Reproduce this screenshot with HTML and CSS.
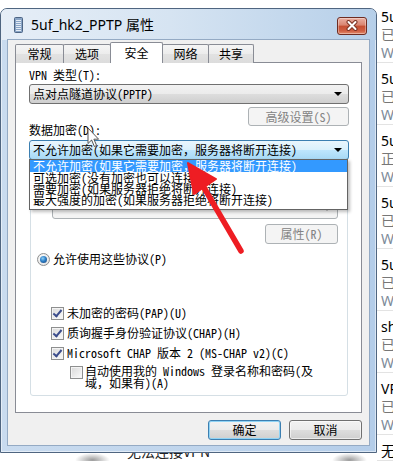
FILE: index.html
```html
<!DOCTYPE html>
<html lang="zh-CN">

<head>
    <meta charset="UTF-8">
    <meta name="viewport" content="width=device-width, initial-scale=1.0">
    <title>5uf_hk2_PPTP 属性</title>
    <link rel="stylesheet" href="styles.css">
</head>

<body>

    <div class="screen">
        <div class="left-col">
            <div class="window">
                <div class="titlebar">
                    <svg class="win-icon" width="9" height="16" viewBox="0 0 9 16">
                        <rect x="0.5" y="0.5" width="8" height="15" rx="1" fill="#8aa5c6" stroke="#4d6584" />
                        <path d="M2 3.5h5M2 5.5h5M2 7.5h5M2 9.5h5M2 11.5h5M2 13.5h5" stroke="#e4ecf5" stroke-width="1" />
                    </svg>
                    <span class="title">5uf_hk2_PPTP 属性</span>
                    <div class="close-btn">
                        <svg width="14" height="11" viewBox="0 0 14 11">
                            <path d="M3.5 2 L10.5 9 M10.5 2 L3.5 9" stroke="#7c3426" stroke-width="4" stroke-linecap="round" />
                            <path d="M3.5 2 L10.5 9 M10.5 2 L3.5 9" stroke="#fff" stroke-width="2" stroke-linecap="round" />
                        </svg>
                    </div>
                </div>

                <div class="client">
                    <div class="tabs">
                        <div class="tab tab-1">常规</div>
                        <div class="tab tab-2">选项</div>
                        <div class="tab tab-3 active">安全</div>
                        <div class="tab tab-4">网络</div>
                        <div class="tab tab-5">共享</div>
                    </div>

                    <div class="panel">
                        <div class="label label-type">VPN 类型(T):</div>
                        <div class="combo">点对点隧道协议(PPTP)<span class="arrow"></span></div>
                        <div class="btn-row">
                            <div class="btn disabled btn-adv">高级设置(S)</div>
                        </div>

                        <div class="label label-enc">数据加密(D):</div>
                        <div class="combo-wrap">
                            <div class="combo open">不允许加密(如果它需要加密，服务器将断开连接)<span class="arrow"></span></div>
                            <ul class="droplist">
                                <li class="sel">不允许加密(如果它需要加密，服务器将断开连接)</li>
                                <li>可选加密(没有加密也可以连接)</li>
                                <li>需要加密(如果服务器拒绝将断开连接)</li>
                                <li>最大强度的加密(如果服务器拒绝将断开连接)</li>
                            </ul>
                        </div>

                        <!-- Authentication group -->
                        <div class="group">
                            <div class="option eap-row"><span class="radio"></span>使用可扩展的身份验证协议(EAP)(E)</div>
                            <div class="combo combo-eap"><span class="arrow"></span></div>
                            <div class="btn-row btn-row-eap">
                                <div class="btn disabled btn-prop">属性(R)</div>
                            </div>
                            <div class="option radio-row"><span class="radio checked"></span>允许使用这些协议(P)</div>
                            <div class="option check-row row-pap"><span class="check on"></span>未加密的密码(PAP)(U)</div>
                            <div class="option check-row"><span class="check on"></span>质询握手身份验证协议(CHAP)(H)</div>
                            <div class="option check-row"><span class="check on"></span>Microsoft CHAP 版本 2 (MS-CHAP v2)(C)</div>
                            <div class="option sub-row">
                                <span class="check"></span>
                                <span class="sub-text">自动使用我的 Windows 登录名称和密码(及<br>域，如果有)(A)</span>
                            </div>
                        </div>
                    </div>

                    <div class="buttons">
                        <div class="btn btn-ok">确定</div>
                        <div class="btn">取消</div>
                    </div>
                </div>
            </div>
            <div class="below">
                <span class="blob"></span>
                <span class="below-text">无法连接VPN</span>
                <span class="blob blob-right"></span>
            </div>
        </div>

        <div class="side">
            <div class="item"><div class="name">5uf_hk1_PPTP</div><div class="state">已断开连接</div><div class="dev">WAN Miniport (PPTP)</div></div>
            <div class="item"><div class="name">5uf_hk3_PPTP</div><div class="state">已断开连接</div><div class="dev">WAN Miniport (PPTP)</div></div>
            <div class="item"><div class="name">5uf_hk2_PPTP</div><div class="state">正在连接</div><div class="dev">WAN Miniport (PPTP)</div></div>
            <div class="item"><div class="name">5uf_jp1_PPTP</div><div class="state">已断开连接</div><div class="dev">WAN Miniport (PPTP)</div></div>
            <div class="item"><div class="name">5uf_us1_PPTP</div><div class="state">已断开连接</div><div class="dev">WAN Miniport (PPTP)</div></div>
            <div class="item"><div class="name">sh_vpn</div><div class="state">已断开连接</div><div class="dev">WAN Miniport (PPTP)</div></div>
            <div class="item"><div class="name">VPN 连接</div><div class="state">已断开连接</div><div class="dev">WAN Miniport (PPTP)</div></div>
            <div class="item"><div class="name">无线网络连接</div></div>
        </div>
    </div>

    <!-- mouse pointer -->
    <svg class="cursor" width="13" height="21" viewBox="0 0 13 21">
        <path d="M1 1 L1 16.5 L4.6 13 L7.4 19.5 L9.6 18.5 L6.9 12.2 L11.6 12.2 Z" fill="#fff" stroke="#555" stroke-width="1" stroke-linejoin="round" />
    </svg>

    <!-- red annotation arrow -->
    <svg class="red-arrow" width="393" height="461" viewBox="0 0 393 461">
        <path d="M241 251 L203 186" stroke="#ee1d23" stroke-width="5.5" stroke-linecap="round" />
        <path d="M188 163 L216 179 L194 194 Z" fill="#ee1d23" stroke="#ee1d23" stroke-width="2" stroke-linejoin="round" />
    </svg>

</body>

</html>
```

FILE: styles.css
```css
/* Global */
body {
    margin: 0;
    width: 393px;
    height: 461px;
    overflow: hidden;
    background: #fff;
    font-family: "Noto Sans Mono CJK SC", "Noto Sans CJK SC", "Noto Sans", sans-serif;
    font-size: 12px;
    color: #000;
    position: relative;
}

.screen {
    display: flex;
    height: 461px;
}

.left-col {
    width: 377px;
    flex: none;
    padding-top: 8px;
    display: flex;
    flex-direction: column;
}

/* Window frame */
.window {
    box-sizing: border-box;
    width: 377px;
    height: 445px;
    border: 1px solid #4f6580;
    border-radius: 7px 7px 0 0;
    background: linear-gradient(to right, #c9dbef, #bed4ec 60%, #b4cde9);
    display: flex;
    flex-direction: column;
    box-shadow: inset 0 0 0 1px rgba(255, 255, 255, 0.5);
}

.titlebar {
    height: 31px;
    flex: none;
    display: flex;
    align-items: center;
    padding-left: 13px;
    border-radius: 6px 6px 0 0;
    background: linear-gradient(to right, #e6eef7 0%, #d6e4f2 45%, #b6cfe9 100%);
}

.win-icon {
    flex: none;
    margin-top: 1px;
}

.title {
    margin-left: 8px;
    font-family: "Noto Sans", "Noto Sans CJK SC", sans-serif;
    font-size: 14px;
    line-height: 16px;
    color: #000;
}

.close-btn {
    margin-left: auto;
    margin-right: 9px;
    margin-top: 2px;
    width: 30px;
    height: 18px;
    box-sizing: border-box;
    border: 1px solid #6e2c22;
    border-radius: 3px;
    background: linear-gradient(#eab0a3 0%, #d98470 45%, #c54e32 50%, #cf5e42 80%, #e38c6d 100%);
    display: flex;
    align-items: center;
    justify-content: center;
    box-shadow: inset 0 0 0 1px rgba(255, 255, 255, 0.35);
}

/* Client area */
.client {
    margin: 0 7px;
    height: 405px;
    background: #f0f0f0;
    box-shadow: 0 0 0 1px #94aac4;
    padding: 2px 7px 0;
    box-sizing: border-box;
}

.tabs {
    display: flex;
    align-items: flex-end;
    height: 21px;
    margin-bottom: -1px;
    position: relative;
}

.tab {
    box-sizing: border-box;
    height: 19px;
    border: 1px solid #898c95;
    border-bottom: none;
    border-radius: 2px 2px 0 0;
    background: linear-gradient(#f5f5f5, #ececec 50%, #e2e2e2 51%, #dcdcdc);
    display: flex;
    align-items: center;
    justify-content: center;
    line-height: 12px;
    margin-left: -1px;
}

.tab-1 { width: 49px; margin-left: 0; }
.tab-2 { width: 48px; }
.tab-3 { width: 53px; }
.tab-4 { width: 47px; }
.tab-5 { width: 46px; }

.tab.active {
    height: 21px;
    background: #fff;
    position: relative;
    z-index: 2;
}

.panel {
    box-sizing: border-box;
    height: 351px;
    border: 1px solid #898c95;
    background: #fff;
    padding: 0 12px 0 13px;
}

.label {
    line-height: 12px;
    white-space: nowrap;
}

.label-type {
    margin-top: 6px;
}

.label-enc {
    margin-top: -2px;
}

/* Combo boxes */
.combo {
    box-sizing: border-box;
    height: 20px;
    border: 1px solid #707070;
    border-radius: 3px;
    background: linear-gradient(#f2f2f2 0%, #ebebeb 50%, #dddddd 51%, #cfcfcf 100%);
    display: flex;
    align-items: center;
    padding-left: 3px;
    line-height: 12px;
    white-space: nowrap;
    position: relative;
    margin-top: 3px;
}

.combo .arrow {
    position: absolute;
    right: 6px;
    top: 7px;
    width: 0;
    height: 0;
    border-left: 4px solid transparent;
    border-right: 4px solid transparent;
    border-top: 4px solid #000;
}

.combo.open {
    margin-top: 0;
    border-color: #3c7fb1;
    background: linear-gradient(#eaf6fd 0%, #d9f0fc 50%, #bee6fd 51%, #a7d9f5 100%);
}

.combo-wrap {
    position: relative;
    margin-top: 4px;
}

.droplist {
    position: absolute;
    left: 0;
    top: 19px;
    width: 319px;
    box-sizing: border-box;
    margin: 0;
    padding: 0 0 4px;
    list-style: none;
    background: #fff;
    border: 1px solid #646464;
    box-shadow: 2px 2px 3px rgba(0, 0, 0, 0.25);
    z-index: 5;
}

.droplist li {
    height: 11px;
    line-height: 11px;
    padding-left: 3px;
    white-space: nowrap;
}

.droplist li.sel {
    height: 12px;
    line-height: 12px;
    background: #3399ff;
    color: #fff;
}

/* Buttons */
.btn-row {
    display: flex;
    justify-content: flex-end;
    margin-top: 3px;
}

.btn {
    box-sizing: border-box;
    height: 20px;
    width: 73px;
    border: 1px solid #707070;
    border-radius: 3px;
    background: linear-gradient(#f2f2f2 0%, #ebebeb 50%, #dddddd 51%, #cfcfcf 100%);
    display: flex;
    align-items: center;
    justify-content: center;
    line-height: 12px;
    box-shadow: inset 0 0 0 1px rgba(255, 255, 255, 0.6);
}

.btn.disabled {
    border-color: #adb2b5;
    background: #f4f4f4;
    color: #838383;
    box-shadow: none;
}

.btn-adv {
    width: 101px;
    height: 19px;
}

.btn-ok {
    border-color: #3c7fb1;
    box-shadow: inset 0 0 0 1px #8fd3f5;
}

.buttons {
    display: flex;
    justify-content: flex-end;
    gap: 8px;
    margin-top: 7px;
}

/* Group box */
.group {
    box-sizing: border-box;
    margin: 14px 1px 0;
    border: 1px solid #d5dfe5;
    border-radius: 3px;
    padding: 0 0 6px;
}

.option {
    display: flex;
    align-items: center;
    height: 14px;
    line-height: 12px;
    white-space: nowrap;
}

.eap-row {
    margin: 8px 0 0 6px;
}

.combo-eap {
    margin: 2px 9px 0 21px;
    border-color: #adb2b5;
    background: #f4f4f4;
}

.combo-eap .arrow {
    border-top-color: #a0a0a0;
}

.btn-row-eap {
    margin: 5px 9px 0 0;
}

.radio-row {
    margin: 8px 0 0 6px;
}

.radio {
    width: 13px;
    height: 13px;
    box-sizing: border-box;
    border-radius: 50%;
    border: 1px solid #8e8f8f;
    background: radial-gradient(circle at 40% 35%, #ffffff, #dcdcdc);
    margin-right: 3px;
    flex: none;
    position: relative;
}

.radio.checked::after {
    content: "";
    position: absolute;
    left: 2px;
    top: 2px;
    width: 7px;
    height: 7px;
    border-radius: 50%;
    background: radial-gradient(circle at 40% 35%, #8fd0f6 0%, #2d7fc7 45%, #1b3f72 100%);
}

.check-row {
    margin: 6px 0 0 20px;
}

.row-pap {
    margin-top: 40px;
}

.check {
    width: 13px;
    height: 13px;
    box-sizing: border-box;
    border: 1px solid #8e8f8f;
    background: linear-gradient(135deg, #d8d8d8, #fbfbfb);
    box-shadow: inset 0 0 0 1px #f4f4f4;
    margin-right: 3px;
    flex: none;
    position: relative;
}

.check.on::after {
    content: "";
    position: absolute;
    left: 3px;
    top: 0px;
    width: 3px;
    height: 7px;
    border-right: 2px solid #3c4d8c;
    border-bottom: 2px solid #3c4d8c;
    transform: rotate(40deg);
}

.sub-row {
    margin: 5px 0 0 39px;
    height: auto;
    align-items: flex-start;
}

.sub-row .check {
    margin-top: 1px;
    margin-right: 2px;
}

.sub-text {
    line-height: 12px;
}

/* Desktop strip below the window */
.below {
    height: 8px;
    position: relative;
    overflow: hidden;
}

.below-text {
    position: absolute;
    left: 127px;
    top: -10px;
    font-family: "Noto Sans CJK SC", sans-serif;
    font-size: 14px;
    line-height: 16px;
    color: #222;
}

.blob {
    position: absolute;
    left: 75px;
    top: 0;
    width: 35px;
    height: 14px;
    background: radial-gradient(ellipse at center, #9a9a9a, rgba(200, 200, 200, 0) 70%);
}

.blob-right {
    left: 332px;
}

/* Connection list on the right */
.side {
    flex: 1;
    overflow: hidden;
    padding-top: 1px;
    font-family: "Noto Sans", "Noto Sans CJK SC", sans-serif;
    font-size: 14px;
}

.item {
    padding: 7px 0 0 4px;
    border-bottom: 1px solid #e3e3e3;
    white-space: nowrap;
}

.item div {
    height: 18px;
    line-height: 18px;
}

.item .state {
    color: #777;
}

.item .dev {
    color: #7d8a99;
}

/* Overlays */
.cursor {
    position: absolute;
    left: 87px;
    top: 127px;
    z-index: 8;
}

.red-arrow {
    position: absolute;
    left: 0;
    top: 0;
    z-index: 9;
    pointer-events: none;
}
```
